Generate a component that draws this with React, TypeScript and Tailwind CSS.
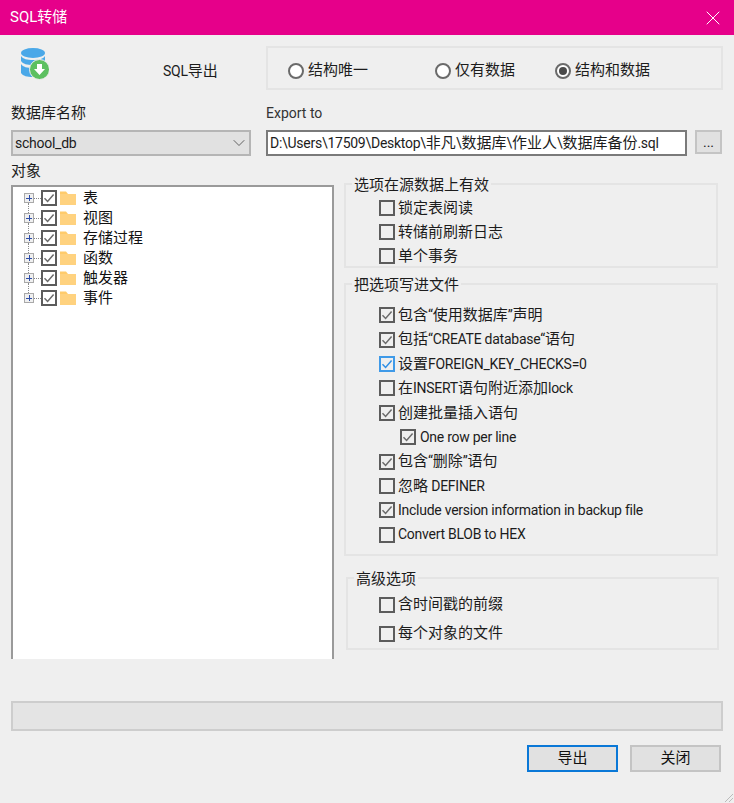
import { X, ChevronDown } from "lucide-react";
import type { ReactNode } from "react";

const treeItems = ["表", "视图", "存储过程", "函数", "触发器", "事件"];

const sourceOptions = ["锁定表阅读", "转储前刷新日志", "单个事务"];

const fileOptions = [
  { label: "包含“使用数据库”声明", checked: true },
  { label: "包括“CREATE database“语句", checked: true },
  { label: "设置FOREIGN_KEY_CHECKS=0", checked: true, focused: true },
  { label: "在INSERT语句附近添加lock", checked: false },
  { label: "创建批量插入语句", checked: true },
  { label: "One row per line", checked: true, nested: true },
  { label: "包含“删除”语句", checked: true },
  { label: "忽略 DEFINER", checked: false },
  { label: "Include version information in backup file", checked: true },
  { label: "Convert BLOB to HEX", checked: false },
];

// latin runs are tighter than the CJK runs, same as the original UI font pairing
function Mixed({ text }: { text: string }) {
  const parts = text.split(/([\u4e00-\u9fff]+)/).filter(Boolean);
  return (
    <span className="whitespace-nowrap text-[14px] tracking-[-0.26px] text-[#1c1c1c]">
      {parts.map((part, i) =>
        /[\u4e00-\u9fff]/.test(part) ? (
          <span key={i} className="text-[15px] tracking-normal">{part}</span>
        ) : (
          <span key={i}>{part}</span>
        ),
      )}
    </span>
  );
}

function CheckBox({ checked, focused }: { checked?: boolean; focused?: boolean }) {
  return (
    <span
      className={`flex h-4 w-4 shrink-0 items-center justify-center border-2 ${
        focused ? "border-[#3f9ae8]" : "border-[#5c5c5c]"
      }`}
    >
      {checked && (
        <svg viewBox="0 0 12 12" className="h-3 w-3" fill="none">
          <path
            d="M1.5 6.2 4.6 9.4 10.6 2.4"
            stroke={focused ? "#2f8fe6" : "#6b6b6b"}
            strokeWidth="1.5"
          />
        </svg>
      )}
    </span>
  );
}

function Radio({ label, checked }: { label: string; checked?: boolean }) {
  return (
    <div className="flex items-center gap-[4px]">
      <span className="flex h-4 w-4 items-center justify-center rounded-full border-2 border-[#6a6a6a] bg-white">
        {checked && <span className="h-2 w-2 rounded-full bg-[#4a4a4a]" />}
      </span>
      <span className="text-[15px] text-[#1c1c1c]">{label}</span>
    </div>
  );
}

function Folder() {
  return (
    <svg viewBox="0 0 18 16" className="h-4 w-[18px] shrink-0">
      <path d="M1 1.5h6l2 2.5h8v11H1z" fill="#ffcb6b" />
      <path d="M1 4h16v11H1z" fill="#ffd27f" />
    </svg>
  );
}

function Expander() {
  return (
    <span className="relative z-10 flex h-[10px] w-[10px] items-center justify-center border border-[#a9a9a9] bg-[#f0f0f0]">
      <span className="absolute h-px w-[6px] bg-[#2f4fa8]" />
      <span className="absolute h-[6px] w-px bg-[#2f4fa8]" />
    </span>
  );
}

function TreeRow({ label, last }: { label: string; last: boolean }) {
  return (
    <div className="relative flex h-5 items-center text-[15px] text-[#111]">
      {!last && <span className="absolute left-[15px] top-[15px] h-[12px] border-l border-dotted border-[#888]" />}
      <span className="ml-[11px]">
        <Expander />
      </span>
      <span className="w-[7px] border-t border-dotted border-[#888]" />
      <CheckBox checked />
      <span className="ml-[2px]">
        <Folder />
      </span>
      <span className="ml-[6px]">{label}</span>
    </div>
  );
}

function Group({ title, className, children }: { title: string; className: string; children: ReactNode }) {
  return (
    <div className={`relative border-2 border-[#e4e4e4] ${className}`}>
      <span className="absolute left-[6px] top-[-10px] bg-[#efefef] px-[2px] text-[15px] leading-[20px] text-[#1c1c1c]">
        {title}
      </span>
      {children}
    </div>
  );
}

function Option({ label, checked, focused, nested, height }: {
  label: string;
  checked?: boolean;
  focused?: boolean;
  nested?: boolean;
  height: string;
}) {
  return (
    <div className={`flex items-center ${height} ${nested ? "gap-[4px] pl-[21px]" : "gap-[3px]"}`}>
      <CheckBox checked={checked} focused={focused} />
      <Mixed text={label} />
    </div>
  );
}

function DbIcon() {
  return (
    <svg viewBox="0 0 28 32" className="h-8 w-7">
      <ellipse cx="12" cy="5" rx="12" ry="5" fill="#4aa8e8" />
      <path d="M0 8c2 3 6 4 12 4s10-1 12-4v5c-2 3-6 4-12 4s-10-1-12-4z" fill="#4aa8e8" />
      <path d="M0 16c2 3 6 4 12 4v9c-6 0-10-1-12-4z" fill="#4aa8e8" />
      <circle cx="18.5" cy="21.5" r="10" fill="#5cc060" stroke="#efefef" strokeWidth="1" />
      <path d="M16 16h5v5h3l-5.5 6-5.5-6h3z" fill="#fff" />
    </svg>
  );
}

function Button({ label, primary }: { label: string; primary?: boolean }) {
  return (
    <button
      type="button"
      className={`h-[27px] w-[91px] border-2 bg-[#e1e1e1] text-[15px] text-[#111] ${
        primary ? "border-[#0a78d7]" : "border-[#c4c4c4]"
      }`}
    >
      {label}
    </button>
  );
}

export default function App() {
  return (
    <div
      className="relative h-[803px] w-[734px] overflow-hidden bg-[#efefef] text-[#1c1c1c]"
      style={{ fontFamily: 'Roboto, "Noto Sans CJK SC", sans-serif' }}
    >
      <div className="flex h-[35px] items-center justify-between bg-[#e6008a] pl-[10px] pr-[9px] text-white">
        <span className="text-[15px]">SQL转储</span>
        <X size={24} strokeWidth={1} />
      </div>

      <div className="px-[11px]">
        <div className="mt-[11px] flex h-[44px]">
          <div className="w-[255px] shrink-0 pl-[10px] pt-[2px]">
            <div className="flex items-start">
              <DbIcon />
              <span className="ml-[114px] mt-[11px]">
                <Mixed text="SQL导出" />
              </span>
            </div>
          </div>
          <div className="flex w-[457px] items-center border-2 border-[#e4e4e4] pl-[20px] pt-[5px]">
            <div className="w-[147px]"><Radio label="结构唯一" /></div>
            <div className="w-[120px]"><Radio label="仅有数据" /></div>
            <Radio label="结构和数据" checked />
          </div>
        </div>

        <div className="mt-[13px] flex h-[20px] items-center">
          <span className="w-[255px] text-[15px]">数据库名称</span>
          <span className="text-[14px] text-[#333]">Export to</span>
        </div>

        <div className="mt-[7px] flex h-[26px] items-start">
          <div className="flex h-[26px] w-[240px] items-center justify-between border-2 border-[#b5b5b5] bg-[#e1e1e1] pl-[2px]">
            <Mixed text="school_db" />
            <ChevronDown size={20} strokeWidth={1.1} className="text-[#555]" />
          </div>
          <div className="ml-[15px] flex h-[26px] w-[421px] items-center border-2 border-[#7a7a7a] bg-white pl-[2px]">
            <Mixed text="D:\Users\17509\Desktop\非凡\数据库\作业人\数据库备份.sql" />
          </div>
          <button
            type="button"
            className="ml-[8px] flex h-[24px] w-[27px] items-center justify-center border-2 border-[#c4c4c4] bg-[#e1e1e1] text-[14px]"
          >
            ...
          </button>
        </div>

        <div className="mt-[5px] flex">
          <div className="w-[323px] shrink-0">
            <div className="h-[24px] text-[15px] leading-[20px]">对象</div>
            <div className="h-[474px] border-x-2 border-t-2 border-[#9a9a9a] bg-white pt-px">
              {treeItems.map((item, i) => (
                <TreeRow key={item} label={item} last={i === treeItems.length - 1} />
              ))}
            </div>
          </div>

          <div className="ml-[10px] w-[375px] pt-[22px]">
            <Group title="选项在源数据上有效" className="mr-px h-[85px] pl-[33px] pt-[11px]">
              {sourceOptions.map((label) => (
                <Option key={label} label={label} height="h-[24px]" />
              ))}
            </Group>
            <Group title="把选项写进文件" className="mr-px mt-[15px] h-[273px] pl-[33px] pt-[18px]">
              {fileOptions.map((option) => (
                <Option key={option.label} {...option} height="h-[24.4px]" />
              ))}
            </Group>
            <Group title="高级选项" className="ml-[2px] mt-[21px] h-[73px] pl-[31px] pt-[11px]">
              <Option label="含时间戳的前缀" height="h-[29px]" />
              <Option label="每个对象的文件" height="h-[29px]" />
            </Group>
          </div>
        </div>

        <div className="mt-[42px] h-[30px] w-[712px] border-2 border-[#cdcdcd] bg-[#e4e4e4]" />

        <div className="mt-[14px] flex w-[710px] justify-end gap-[12px]">
          <Button label="导出" primary />
          <Button label="关闭" />
        </div>
      </div>

      <svg viewBox="0 0 12 12" className="absolute bottom-0 right-0 h-3 w-3" fill="none" stroke="#bbb">
        <path d="M11 3 3 11M11 7 7 11" />
      </svg>
    </div>
  );
}
